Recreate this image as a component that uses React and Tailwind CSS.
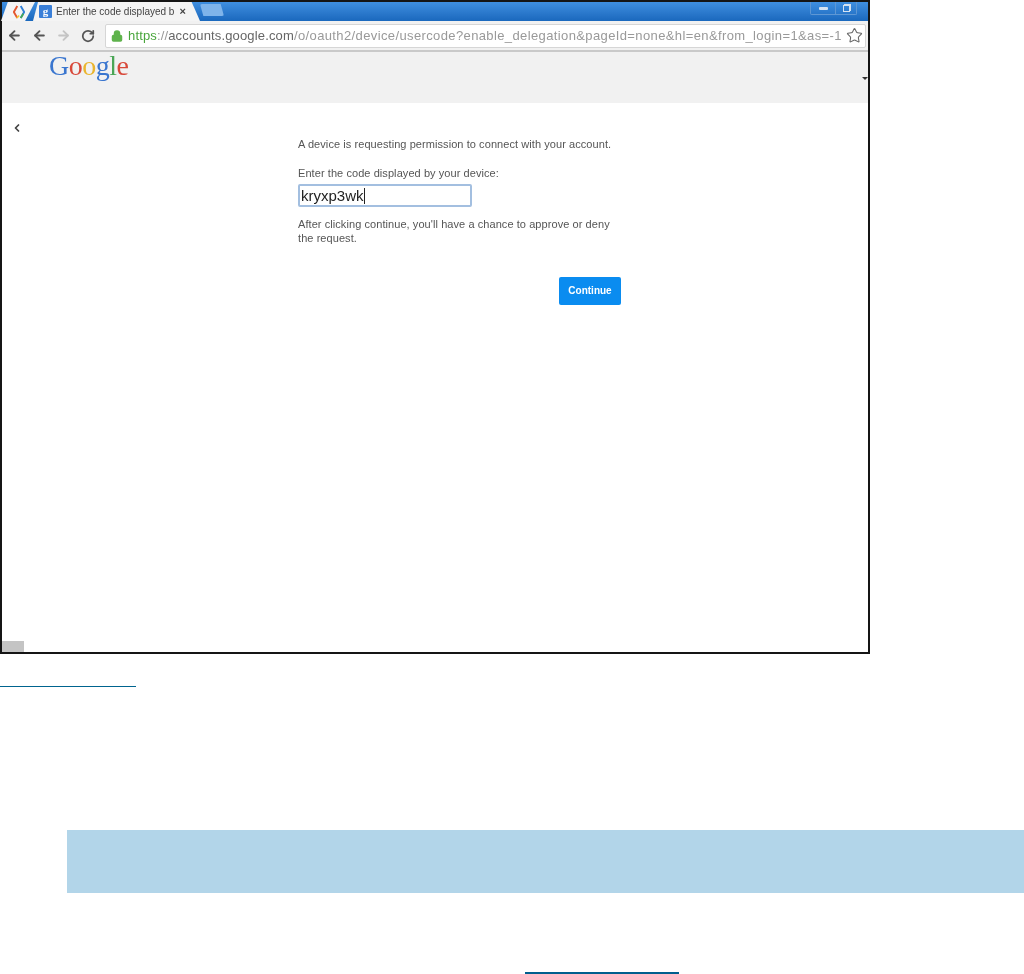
import { ArrowLeft, ArrowRight, RotateCw, Lock, Star, ChevronLeft } from "lucide-react";

const SANS = "font-['Liberation_Sans',Arial,sans-serif]";

function AppTabIcon() {
  return (
    <svg width="12" height="16" viewBox="0 0 14 16" className="shrink-0 ml-[2px]">
      <path d="M5 1 L1 8 L5 15" fill="none" stroke="#e4572e" strokeWidth="2.2" />
      <path d="M4.5 15 L7 12" fill="none" stroke="#f2c230" strokeWidth="2" />
      <path d="M9 1 L13 8 L9 15" fill="none" stroke="#2f7fd6" strokeWidth="2.2" />
      <path d="M9 15 L12 10" fill="none" stroke="#45a952" strokeWidth="2" />
    </svg>
  );
}

function TabStrip() {
  return (
    <div className="h-[19px] flex items-end bg-gradient-to-b from-[#3f8fe0] to-[#1a68bd]">
      <div className="w-[34px] h-[19px] bg-[#f4f4f4] flex items-center justify-center [clip-path:polygon(20%_0,100%_0,71%_100%,0_100%)] ml-[-1px]">
        <AppTabIcon />
      </div>
      <div className="ml-[-2px] w-[167px] h-[19px] bg-[#f4f4f4] flex items-center pl-[6px] [clip-path:polygon(3%_0,95%_0,100%_100%,0_100%)]">
        <div className="w-[13px] h-[13px] rounded-[1px] bg-[#3a7fd8] flex items-center justify-center text-white text-[11px] leading-none font-['Liberation_Serif',serif] font-bold">
          g
        </div>
        <span className={`${SANS} ml-[4px] text-[10px] text-[#444] whitespace-nowrap`}>
          Enter the code displayed b
        </span>
        <span className={`${SANS} text-[11px] text-[#444] font-bold leading-none ml-[5px]`}>×</span>
      </div>
      <div className="w-[24px] h-[12px] mb-[5px] bg-[#7fb4ea] rounded-[2px] [clip-path:polygon(0_0,86%_0,100%_100%,14%_100%)]" />
      <div className="flex-1" />
      <div className="flex self-start h-[13px] mr-[11px] border border-[#5e97d4] border-t-0 rounded-b-[2px]">
        <div className="w-[25px] flex items-center justify-center border-r border-[#5e97d4]">
          <div className="w-[9px] h-[3px] bg-[#d5e3f2] rounded-[1px]" />
        </div>
        <div className="w-[20px] flex items-center justify-center">
          <div className="w-[7px] h-[7px] border border-[#d5e3f2] shadow-[1px_-1px_0_#d5e3f2]" />
        </div>
      </div>
    </div>
  );
}

function Toolbar() {
  return (
    <div className="h-[31px] bg-[#f1f1f1] border-b-2 border-[#c9c9c9] flex items-center pl-[5px] pr-[2px]">
      <ArrowLeft size={15} strokeWidth={3} className="text-[#555]" />
      <ArrowLeft size={15} strokeWidth={3} className="text-[#555] ml-[10px]" />
      <ArrowRight size={15} strokeWidth={3} className="text-[#c4c4c4] ml-[9px]" />
      <RotateCw size={14} strokeWidth={3} className="text-[#555] ml-[10px]" />
      <div className="ml-[10px] flex-1 h-[24px] bg-white border border-[#d6d6d6] rounded-[2px] flex items-center pl-[5px] pr-[2px]">
        <Lock size={12} strokeWidth={3} fill="currentColor" className="text-[#5fb34c] shrink-0" />
        <div className={`${SANS} ml-[5px] text-[13px] whitespace-nowrap flex-1 text-[#999] tracking-[0.15px]`}>
          <span className="text-[#4aa63c]">https</span>
          <span>://</span>
          <span className="text-[#666]">accounts.google.com</span>
          <span className="tracking-[0.38px]">/o/oauth2/device/usercode?enable_delegation&amp;pageId=none&amp;hl=en&amp;from_login=1&amp;as=-1</span>
        </div>
        <Star size={17} strokeWidth={1.5} className="text-[#666] shrink-0" />
      </div>
    </div>
  );
}

function GoogleHeader() {
  return (
    <div className="h-[51px] bg-[#f1f1f1] relative pl-[47px]">
      <div className="font-['Liberation_Serif',serif] text-[28px] leading-[28px] tracking-[-0.5px]">
        <span className="text-[#3a76cf]">G</span>
        <span className="text-[#d8493a]">o</span>
        <span className="text-[#eab52e]">o</span>
        <span className="text-[#3a76cf]">g</span>
        <span className="text-[#4aa656]">l</span>
        <span className="text-[#d8493a]">e</span>
      </div>
      <div className="absolute right-0 top-[25px] w-0 h-0 border-x-[3px] border-x-transparent border-t-[3px] border-t-[#333]" />
    </div>
  );
}

function DeviceForm() {
  return (
    <div className="flex-1 bg-white relative">
      <ChevronLeft size={12} strokeWidth={3.5} className="text-[#444] absolute left-[9px] top-[19px]" />
      <div className={`${SANS} ml-[296px] w-[323px] pt-[34px] text-[11px] leading-[14px] text-[#555] tracking-[0.07px]`}>
        <p>A device is requesting permission to connect with your account.</p>
        <p className="mt-[15px]">Enter the code displayed by your device:</p>
        <div className="mt-[4px] w-[174px] h-[23px] border-2 border-[#a3bfe0] rounded-[2px] flex items-center pl-[1px] text-[15px] text-[#222] tracking-normal">
          kryxp3wk
          <span className="w-px h-[16px] bg-[#222]" />
        </div>
        <p className="mt-[10px] w-[312px]">
          After clicking continue, you'll have a chance to approve or deny the request.
        </p>
        <div className="flex justify-end mt-[32px]">
          <button className="w-[62px] h-[28px] rounded-[2px] bg-[#0a8cf0] text-white text-[10px] font-bold tracking-normal">
            Continue
          </button>
        </div>
      </div>
      <div className="absolute left-0 bottom-0 w-[22px] h-[11px] bg-[#c4c4c4]" />
    </div>
  );
}

export default function App() {
  return (
    <div className="w-[1024px] h-[974px] bg-white overflow-hidden">
      <div className="w-[870px] h-[654px] border-2 border-[#151515] flex flex-col blur-[0.5px]">
        <TabStrip />
        <Toolbar />
        <GoogleHeader />
        <DeviceForm />
      </div>
      <div className="mt-[32px] w-[136px] h-px bg-[#00648f]" />
      <div className="mt-[143px] ml-[67px] h-[63px] bg-[#b2d5e9]" />
      <div className="mt-[79px] ml-[525px] w-[154px] h-[2px] bg-[#005f8e]" />
    </div>
  );
}
